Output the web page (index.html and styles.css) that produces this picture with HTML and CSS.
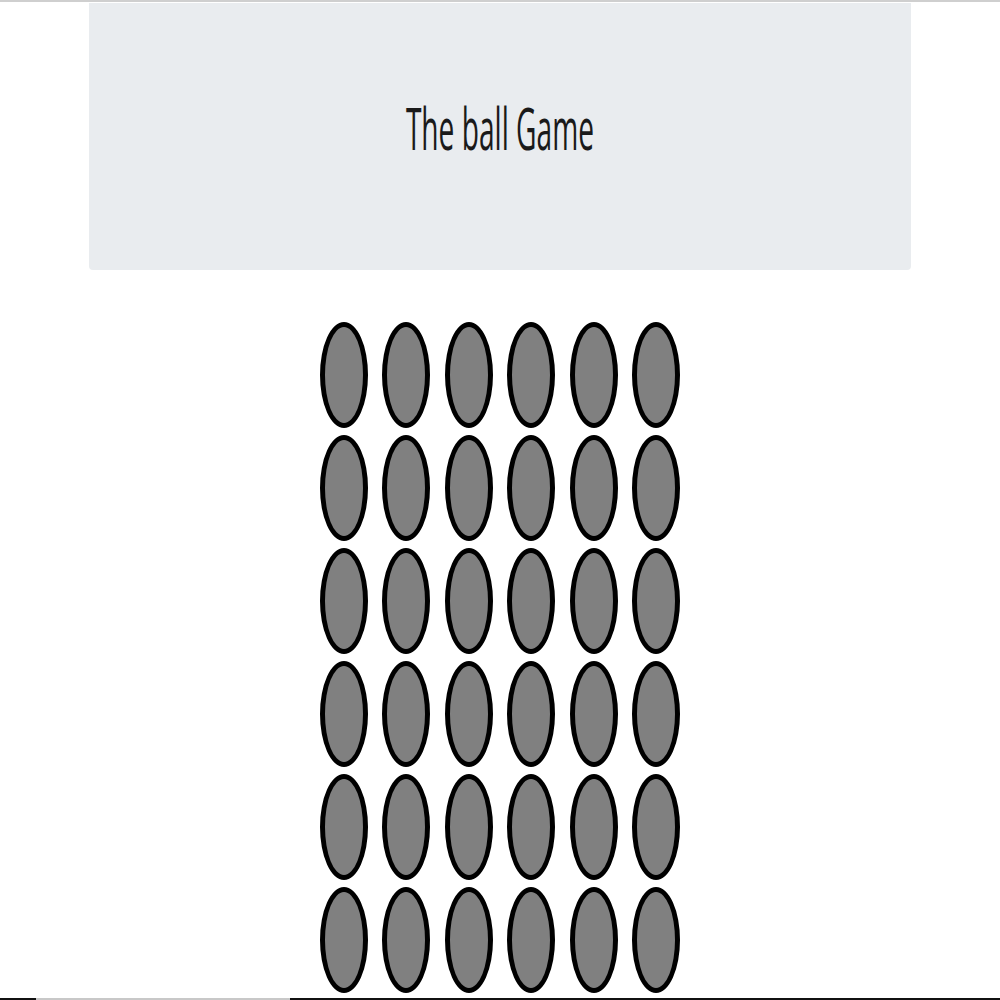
FILE: index.html
```html
<!doctype html>
<html lang="en">

<head>
  <meta charset="UTF-8">
  <meta name="viewport" content="width=device-width, initial-scale=1">
  <title>The ball Game</title>
  <link rel="stylesheet" href="styles.css">
</head>

<body>
  <div class="topline"></div>
  <header class="jumbotron">
    <h1 class="title">The ball Game</h1>
  </header>

  <main class="board">
    <div class="ball"></div><div class="ball"></div><div class="ball"></div>
    <div class="ball"></div><div class="ball"></div><div class="ball"></div>
    <div class="ball"></div><div class="ball"></div><div class="ball"></div>
    <div class="ball"></div><div class="ball"></div><div class="ball"></div>
    <div class="ball"></div><div class="ball"></div><div class="ball"></div>
    <div class="ball"></div><div class="ball"></div><div class="ball"></div>
    <div class="ball"></div><div class="ball"></div><div class="ball"></div>
    <div class="ball"></div><div class="ball"></div><div class="ball"></div>
    <div class="ball"></div><div class="ball"></div><div class="ball"></div>
    <div class="ball"></div><div class="ball"></div><div class="ball"></div>
    <div class="ball"></div><div class="ball"></div><div class="ball"></div>
    <div class="ball"></div><div class="ball"></div><div class="ball"></div>
  </main>

  <div class="bottomline">
    <span class="seg dark first"></span>
    <span class="seg light"></span>
    <span class="seg dark rest"></span>
  </div>
</body>

</html>
```

FILE: styles.css
```css
body {
  margin: 0;
  background-color: #fff;
  color: #212529;
  font-family: "Open Sans", "Liberation Sans", sans-serif;
  overflow: hidden;
}

.topline {
  height: 2px;
  background-color: #cfcfcf;
  border-bottom: 1px solid #fff;
}

.jumbotron {
  width: 822px;
  height: 267px;
  margin: 0 auto;
  background-color: #e9ecef;
  border-radius: 0 0 4px 4px;
  display: flex;
  align-items: center;
  justify-content: center;
}

.title {
  margin: 0 0 18px 0;
  font-size: 58px;
  font-weight: 400;
  line-height: 1;
  display: inline-block;
  transform: scaleX(0.485);
  white-space: nowrap;
  color: #1a1a1a;
}

.board {
  width: 360px;
  margin: 52px auto 0;
  display: grid;
  grid-template-columns: repeat(6, 48px);
  column-gap: 14.4px;
  row-gap: 7px;
}

.ball {
  box-sizing: border-box;
  width: 48px;
  height: 106px;
  border: 5px solid #000;
  border-radius: 50%;
  background-color: #808080;
}

/* window edge at the bottom */
.bottomline {
  position: fixed;
  left: 0;
  right: 0;
  bottom: 0;
  height: 2px;
  display: flex;
  background: #fff;
  border-top: 1px solid #fff;
}

.seg {
  height: 2px;
}

.dark {
  background-color: #111;
}

.light {
  background-color: #c8c8c8;
  width: 254px;
}

.first {
  width: 36px;
}

.rest {
  flex: 1;
}
```
